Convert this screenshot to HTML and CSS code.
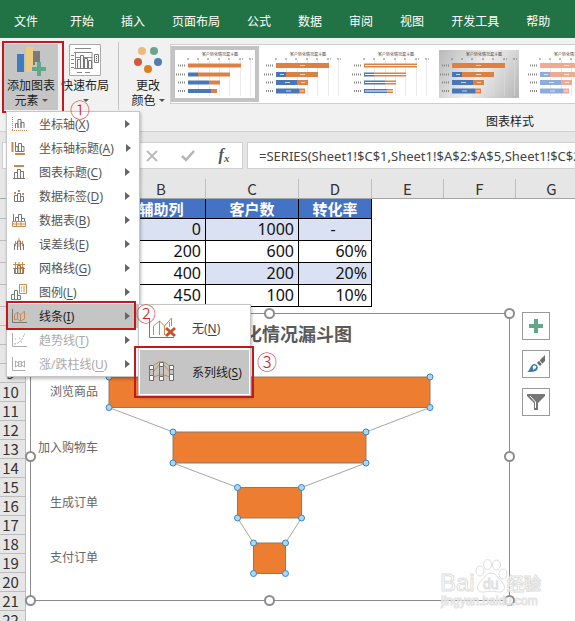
FILE: index.html
```html
<!DOCTYPE html>
<html lang="zh-CN">
<head>
<meta charset="utf-8">
<title>客户转化情况漏斗图</title>
<link rel="stylesheet" href="styles.css">
</head>
<body>
<svg class="defs" aria-hidden="true">
  <symbol id="thumb" viewBox="0 0 80 48">
    <g class="grid"><path d="M23.5 10V46M34.5 10V46M44.5 10V46M54.5 10V46M65.5 10V46M75.5 10V46"/></g>
    <text class="thumb-title" x="45" y="6" text-anchor="middle">客户转化情况漏斗图</text>
    <path class="ticks" d="M12 9h2M22 9h3M32 9h3M43 9h3M53 9h3M64 9h4M74 9h4"/>
    <path class="names" d="M3 15.5h8M1 24.500h10M3 32.500h8M3 41h8"/>
    <path class="b" d="M13 15.500H66M23 24.500H55M34 32.500H45M36 41H42"/>
    <path class="a" d="M13 24.500H23M13 32.500H34M13 41H36"/>
    <path class="mid" d="M14 15.500H66M14 24.500H55M14 32.500H45M14 41H42"/>
    <path class="vals" d="M37 15.500h5M17 24.500h4M37 24.500h5M22 32.500h5M38 32.500h4M23 41h5M37 41h4"/>
  </symbol>
</svg>

<nav class="tabs" aria-label="功能区">
  <a href="#file">文件</a><a href="#home">开始</a><a href="#insert">插入</a><a href="#layout">页面布局</a><a href="#formula">公式</a><a href="#data">数据</a><a href="#review">审阅</a><a href="#view">视图</a><a href="#dev">开发工具</a><a href="#help">帮助</a>
</nav>

<section class="ribbon">
  <div class="add-element">
    <button class="tool tool-active">
      <svg width="30" height="30" viewBox="0 0 30 30"><path fill="#3f7cbd" d="M1 9h7v18H1z"/><path fill="#efcd80" d="M10 2h7v25h-7z"/><path fill="#7a7a7a" d="M17 6h7v14h-7z"/><path fill="#c5c5c5" d="M16 20h3v-3h3v9h-6z"/><path fill="#5fa88a" d="M21 17h4v5h5v4h-5v5h-4v-5h-5v-4h5z"/></svg>
      <span>添加图表<br>元素<i class="caret"></i></span>
    </button>
    <div class="mark mark-one"></div>

    <div class="menu" role="menu">
      <button role="menuitem"><svg width="16" height="16" viewBox="0 0 16 16"><path class="g" d="M4.500 12V7.500H7V12M7 12V3.500h3V12M10 12V6.500h3V12"/><path class="o" stroke-dasharray="1 1" d="M1.500 1v14M1 14.500h15"/></svg><span>坐标轴(<u>X</u>)</span></button>
      <button role="menuitem"><svg width="16" height="16" viewBox="0 0 16 16"><path class="g" d="M4.500 2v9.500H13M4.500 6.500H7v5M7.500 11V3.500h3V11M10.500 6.500H13v5"/><path class="o2" d="M1.500 2v10M4 14h10"/></svg><span>坐标轴标题(<u>A</u>)</span></button>
      <button role="menuitem"><svg width="16" height="16" viewBox="0 0 16 16"><path class="g" d="M3.500 14.500v-6h3v6zM6.500 14.500v-9h3v9zM9.500 14.500v-7h3v7zM2 14.500h12"/><path class="o2" d="M3 2h10"/></svg><span>图表标题(<u>C</u>)</span></button>
      <button role="menuitem"><svg width="16" height="16" viewBox="0 0 16 16"><path class="g" d="M3.500 13.500v-6h3v6zM6.500 13.500v-8h3v8zM9.500 13.500v-5h3v5z"/><path class="o2" d="M3 5h2M7 3h2M11 6h2"/></svg><span>数据标签(<u>D</u>)</span></button>
      <button role="menuitem"><svg width="16" height="16" viewBox="0 0 16 16"><path class="g" d="M2.500 2v8M4.500 9V5.500h3V9M7.500 9V2.500h3V9M10.500 9V6.500h3V9"/><path class="o" d="M1.500 9.500h13v5h-13zM1.500 12h13M5.500 9.500v5M10 9.500v5"/></svg><span>数据表(<u>B</u>)</span></button>
      <button role="menuitem"><svg width="16" height="16" viewBox="0 0 16 16"><path class="g" d="M3.500 14v-6l3-1v7M6.500 14v-9h3v9M9.500 7l3 1v6"/><path class="o" d="M4.500 5v5M8 2v9M11.500 5v5"/></svg><span>误差线(<u>E</u>)</span></button>
      <button role="menuitem"><svg width="16" height="16" viewBox="0 0 16 16"><path class="o" d="M2 4.500h12M2 8.500h12M4.500 2v12M8 2v12M11.500 2v12"/><path class="g" d="M3.500 13.500v-5h3v5zM6.500 13.500v-8h3v8zM9.500 13.500v-6h3v6z"/></svg><span>网格线(<u>G</u>)</span></button>
      <button role="menuitem"><svg width="16" height="16" viewBox="0 0 16 16"><path class="g" d="M.5 15.500v-5h3v5zM3.500 15.500v-9h3v9zM6.500 15.500v-4h3v4z"/><path class="o" fill="#fff" d="M8.500.5h7v9h-7z"/><path class="o" d="M10 3h1M12 3h2M10 5h1M12 5h2M10 7h1M12 7h2"/></svg><span>图例(<u>L</u>)</span></button>
      <button role="menuitem" class="current"><svg width="16" height="16" viewBox="0 0 16 16"><path class="g" d="M1.500 1v13.500H16"/><path class="o" d="M3.500 12V7l3-3 3 3 4-4v8l-4 2-3-2zM6.500 4v7M9.500 7v6"/></svg><span>线条(<u>I</u>)</span></button>
      <button role="menuitem" class="off"><svg width="16" height="16" viewBox="0 0 16 16"><path class="g" d="M1.500 1v13.500H16"/><path class="g" d="M3 12c5 0 8-4 10-9" stroke-dasharray="2 1"/><path class="g" d="M4 7h1M8 6h1M10 10h1M13 2h1"/></svg><span>趋势线(<u>T</u>)</span></button>
      <button role="menuitem" class="off"><svg width="16" height="16" viewBox="0 0 16 16"><path class="g" d="M1.500 1v13.500H14M4.500 5v6l4-3zM13.500 5v6l-4-3zM7.500 5.500h3v5h-3z"/></svg><span>涨/跌柱线(<u>U</u>)</span></button>
    </div>
    <div class="mark mark-two"></div>
    <div class="submenu" role="menu">
      <button role="menuitem"><svg width="28" height="22" viewBox="0 0 28 22"><path class="g" d="M1.500 1v19.500H26"/><path class="o" d="M5.500 18V9l6-5 5 5 7-8v8M11.500 4v14M16.500 9v9M21.500 5v5"/><path d="M18 11l9 8M27 11l-9 8" stroke="#c8502c" stroke-width="3" fill="none"/></svg><span>无(<u>N</u>)</span></button>
      <button role="menuitem" class="current"><svg width="28" height="22" viewBox="0 0 28 22"><path class="o" d="M6 4l5-3h5l6 4M6 10l5-6h5l6 7M6 16l5-2h5l6 2"/><path fill="#fff" stroke="#6c6c6c" d="M1.500 4.500h4v4h-4zM1.500 14.500h4v5h-4zM11.500 1.500h4v4h-4zM11.500 15.500h4v4h-4zM21.500 4.500h4v4h-4zM21.500 13.500h4v6h-4z"/><path class="g" d="M1.500 8v7M5.500 8v7M11.500 5v11M15.500 5v11M21.500 8v6M25.500 8v6"/></svg><span>系列线(<u>S</u>)</span></button>
    </div>
    <div class="mark mark-three"></div>
    <span class="step step-one">①</span>
    <span class="step step-two">②</span>
    <span class="step step-three">③</span>
  </div>

  <button class="tool">
    <svg width="32" height="32" viewBox="0 0 32 32"><path fill="#fff" stroke="#aaa" d="M.5.500h31v31H.5z"/><path stroke="#888" fill="none" d="M6 4.500h16M6.500 8v17M5 8.500h18v16M6 13.500h17M2 11.500h3M2 15.500h3M2 19.500h3M2 23.500h3M5 24.500h19M8 28.500h5M16 28.500h5"/><path stroke="#777" fill="#f7f7f7" d="M8.500 15.500h3v9h-3zM11.500 11.500h3v13h-3zM15.500 14.500h3v10h-3zM19.500 16.500h3v8h-3zM25.500 10.500h4v8h-4z"/><path stroke="#555" d="M27 12.500h1M27 14.500h1M27 16.500h1"/></svg>
    <span>快速布局<br><i class="caret"></i></span>
  </button>
  <hr>
  <button class="tool">
    <svg width="32" height="32" viewBox="0 0 32 32"><circle cx="10" cy="7" r="4" fill="#e8bd7a"/><circle cx="22" cy="7" r="4" fill="#6aa58a"/><circle cx="6" cy="18" r="4" fill="#cf5b3c"/><circle cx="26" cy="18" r="4" fill="#4f7db4"/><circle cx="16" cy="25" r="4" fill="#dc7d22"/></svg>
    <span>更改<br>颜色<i class="caret"></i></span>
  </button>

  <div class="styles">
    <div class="gallery">
      <button class="thumb chosen" aria-label="样式 1"><svg><use href="#thumb"/></svg></button>
      <button class="thumb thick" aria-label="样式 2"><svg><use href="#thumb"/></svg></button>
      <button class="thumb lined" aria-label="样式 3"><svg><use href="#thumb"/></svg></button>
      <button class="thumb thick shade" aria-label="样式 4"><svg><use href="#thumb"/></svg></button>
      <button class="thumb thick pale" aria-label="样式 5"><svg><use href="#thumb"/></svg></button>
    </div>
    <div class="group-name">图表样式</div>
  </div>
</section>

<section class="formula-row">
  <input class="name-box" aria-label="名称框">
  <div class="formula-tools">
    <button aria-label="取消"><svg width="12" height="12" viewBox="0 0 12 12"><path d="M1 1l10 10M11 1L1 11" stroke="#bbb" stroke-width="2"/></svg></button>
    <button aria-label="输入"><svg width="14" height="12" viewBox="0 0 14 12"><path d="M1 6l4 4 8-9" stroke="#b5b5b5" stroke-width="2.500" fill="none"/></svg></button>
    <button class="fx" aria-label="插入函数">f<sub>x</sub></button>
  </div>
  <input class="formula" aria-label="编辑栏" value="=SERIES(Sheet1!$C$1,Sheet1!$A$2:$A$5,Sheet1!$C$2:$C$5,2)">
</section>

<main class="sheet">
  <table>
    <colgroup><col class="w-head"><col class="w-a"><col class="w-b"><col class="w-c"><col class="w-d"><col class="w-e"><col class="w-e"><col class="w-e"></colgroup>
    <thead><tr><th></th><th>A</th><th>B</th><th>C</th><th>D</th><th>E</th><th>F</th><th>G</th></tr></thead>
    <tbody>
      <tr class="title"><th>1</th><td></td><td>辅助列</td><td>客户数</td><td>转化率</td></tr>
      <tr class="data"><th>2</th><td></td><td class="tint">0</td><td class="tint">1000</td><td class="tint center">-</td></tr>
      <tr class="data"><th>3</th><td></td><td>200</td><td>600</td><td>60%</td></tr>
      <tr class="data"><th>4</th><td></td><td>400</td><td class="tint">200</td><td class="tint">20%</td></tr>
      <tr class="data"><th>5</th><td></td><td>450</td><td>100</td><td>10%</td></tr>
      <tr><th>6</th></tr><tr><th>7</th></tr><tr><th>8</th></tr><tr><th>9</th></tr><tr><th>10</th></tr><tr><th>11</th></tr><tr><th>12</th></tr><tr><th>13</th></tr><tr><th>14</th></tr><tr><th>15</th></tr><tr><th>16</th></tr><tr><th>17</th></tr><tr><th>18</th></tr><tr><th>19</th></tr><tr><th>20</th></tr><tr><th>21</th></tr><tr><th>22</th></tr>
    </tbody>
  </table>

  <div class="chart">
    <svg width="480" height="288" viewBox="30 313 480 288">
      <path class="frame" d="M30.500 313.500h479v287h-479z"/>
      <text class="chart-title" x="271" y="341" text-anchor="middle">客户转化情况漏斗图</text>
      <g class="labels" text-anchor="end"><text x="98" y="396">浏览商品</text><text x="98" y="452">加入购物车</text><text x="98" y="507">生成订单</text><text x="98" y="562">支付订单</text></g>
      <path class="series-lines" d="M109 407.500L173 432M430 407.500L366 432M173 463L237.500 487.500M366 463L301.500 487.500M237.500 518L253.500 543M301.500 518L285.500 543"/>
      <g class="bars"><path d="M109 377h321v30.500H109z"/><path d="M173 432h193v31H173z"/><path d="M237.500 487.500h64V518h-64z"/><path d="M253.500 543h32v30.500h-32z"/></g>
      <g class="dots"><circle cx="109" cy="377" r="3"/><circle cx="430" cy="377" r="3"/><circle cx="109" cy="407.500" r="3"/><circle cx="430" cy="407.500" r="3"/><circle cx="173" cy="432" r="3"/><circle cx="366" cy="432" r="3"/><circle cx="173" cy="463" r="3"/><circle cx="366" cy="463" r="3"/><circle cx="237.500" cy="487.500" r="3"/><circle cx="301.500" cy="487.500" r="3"/><circle cx="237.500" cy="518" r="3"/><circle cx="301.500" cy="518" r="3"/><circle cx="253.500" cy="543" r="3"/><circle cx="285.500" cy="543" r="3"/><circle cx="253.500" cy="573.500" r="3"/><circle cx="285.500" cy="573.500" r="3"/></g>
      <g class="handles"><circle cx="269.500" cy="313.500" r="4.500"/><circle cx="509.500" cy="313.500" r="4.500"/><circle cx="30.500" cy="456.500" r="4.500"/><circle cx="509.500" cy="456.500" r="4.500"/><circle cx="30.500" cy="600.500" r="4.500"/><circle cx="269.500" cy="600.500" r="4.500"/><circle cx="509.500" cy="600.500" r="4.500"/></g>
      <g class="watermark">
        <text class="brand" x="440" y="591">Bai</text>
        <ellipse cx="480" cy="571" rx="4" ry="5"/><ellipse cx="487.500" cy="564.500" rx="4" ry="5"/><ellipse cx="496.500" cy="565" rx="4" ry="5"/><ellipse cx="503" cy="574" rx="4" ry="5"/>
        <path d="M491 573c5 0 7 5 11 9 5 5 2 11-4 10-5-1-9-1-14 0-6 1-9-5-4-10 4-4 6-9 11-9z"/>
        <text class="brand-du" x="483" y="589">du</text>
        <text class="brand-cn" x="507" y="590">经验</text>
        <text class="brand-url" x="441" y="605">jingyan.baidu.com</text>
      </g>
    </svg>
    <div class="chart-tools">
      <button aria-label="图表元素"><svg width="20" height="20" viewBox="0 0 20 20"><path fill="#5fa88a" d="M8 3h4v5h5v4h-5v5H8v-5H3V8h5z"/></svg></button>
      <button aria-label="图表样式"><svg width="20" height="20" viewBox="0 0 20 20"><path fill="#6d6d6d" d="M19 1v6l-5 5-3-3z"/><path stroke="#fff" d="M13 6l3 4"/><path fill="#3f78ad" d="M1 18c3-1 3-7 7-8 3 0 5 3 3 6-2 2-6 2-10 2z"/><path fill="#fff" d="M7 12c2-1 4 0 3 2l-3 2c1-2-1-2 0-4z"/></svg></button>
      <button aria-label="图表筛选器"><svg width="20" height="20" viewBox="0 0 20 20"><path fill="#777" d="M1 2h18v2l-7 7v7H8v-7L1 4z"/><path stroke="#fff" fill="none" d="M4 4l5.500 6v6"/></svg></button>
    </div>
  </div>
</main>
</body>
</html>
```
FILE: styles.css
```css
* { box-sizing: border-box; }

body {
  margin: 0;
  height: 100vh;
  display: flex;
  flex-direction: column;
  overflow: hidden;
  background: #fff;
  color: #222;
  font: 12px/15px "Noto Sans", "Noto Sans CJK SC", sans-serif;
}

button, input { font: inherit; color: inherit; border: 0; padding: 0; margin: 0; background: none; border-radius: 0; }
u { text-underline-offset: 2px; }
.defs { display: none; }

.tabs {
  flex: none;
  height: 38px;
  display: flex;
  gap: 27px;
  padding: 14px 14px 0;
  background: #217346;
  white-space: nowrap;
}
.tabs a { color: #fff; text-decoration: none; }
.tabs a:first-child { margin-right: 5px; }

.ribbon {
  flex: none;
  height: 94px;
  display: flex;
  align-items: flex-start;
  padding: 6px 0 0 4px;
  background: #f1f1f1;
  border-bottom: 1px solid #cfcfcf;
}
.add-element { position: relative; z-index: 2; }
.tool {
  width: 54px;
  height: 66px;
  display: flex;
  flex-direction: column;
  align-items: center;
  gap: 2px;
  line-height: 15px;
  white-space: nowrap;
}
.tool svg { height: 32px; flex: none; }
.tool-active { background: #c5c5c5; }
.ribbon hr { width: 1px; height: 68px; margin: -2px 2px 0 6px; border: 0; background: #c3c3c3; }
.caret { display: inline-block; border: 3px solid transparent; border-top-color: #555; border-bottom: 0; margin-left: 3px; vertical-align: 3px; }

.styles { flex: 1; min-width: 0; margin-left: -5px; }
.gallery {
  height: 60px;
  display: flex;
  overflow: hidden;
  background: #fff;
  border: 1px solid #cfcfcf;
  border-right: 0;
}
.thumb { flex: none; width: 88px; height: 56px; margin-top: 1px; border: 4px solid transparent; --a: #4a76b8; --b: #dd8044; --w: 4px; }
.thumb svg { display: block; width: 80px; height: 48px; background: #fff; }
.chosen { border-color: #c3c3c3; }
.thick { --w: 5px; --vals: #fff; }
.lined { --mid: #fff; }
.shade svg { background: linear-gradient(120deg, #b9b9b9, #efefef 50%, #b5b5b5); }
.pale { --a: #8fabdc; --b: #efaa92; }
.thumb-title { font-size: 4px; fill: #444; }
.grid { stroke: #ddd; stroke-opacity: .6; }
.ticks, .names { stroke: #777; stroke-width: 1px; stroke-dasharray: 2 1; }
.names { stroke-width: 2px; stroke: #888; stroke-dasharray: 1 1; }
.a { stroke: var(--a); stroke-width: var(--w); }
.b { stroke: var(--b); stroke-width: var(--w); }
.mid { stroke: var(--mid, none); stroke-width: 1px; }
.vals { stroke: var(--vals, none); stroke-width: 1px; stroke-opacity: .7; }
.group-name { margin-top: 10px; padding-left: 316px; white-space: nowrap; }

.menu, .submenu { position: absolute; background: #fff; border: 1px solid #c6c6c6; box-shadow: 1px 2px 3px rgba(0, 0, 0, .25); }
.menu { left: 2px; top: 67px; width: 134px; color: #555; }
.menu button {
  width: 100%;
  height: 24px;
  display: flex;
  align-items: center;
  gap: 12px;
  padding: 0 9px 0 4px;
  text-align: left;
  white-space: nowrap;
}
.menu button::after { content: ""; margin-left: auto; border: 4px solid transparent; border-left: 5px solid #666; border-right: 0; }
.menu .current, .submenu .current { background: #c5c5c5; color: #222; }
.menu .off { color: #aaa; }
.menu .off svg { opacity: .6; }
.menu svg, .submenu svg { flex: none; }
.g { fill: none; stroke: #777; }
.o { fill: none; stroke: #c98a4c; }
.o2 { fill: none; stroke: #c98a4c; stroke-width: 2px; }

.submenu { left: 134px; top: 260px; width: 113px; padding: 1px; color: #444; }
.submenu button { width: 100%; height: 44px; display: flex; align-items: center; gap: 16px; padding-left: 8px; white-space: nowrap; }

.mark { position: absolute; border: 2px solid #c01a1f; pointer-events: none; }
.mark-one { left: -2px; top: -3px; width: 62px; height: 72px; }
.mark-two { left: 2px; top: 257px; width: 130px; height: 29px; }
.mark-three { left: 130px; top: 302px; width: 120px; height: 52px; }
.step { position: absolute; color: #d0262c; font: 300 20px/20px "Noto Sans CJK SC", sans-serif; }
.step-one { left: 66px; top: 56px; }
.step-two { left: 132px; top: 260px; }
.step-three { left: 253px; top: 308px; }

.formula-row { flex: none; display: flex; gap: 4px; padding: 10px 0 10px 2px; background: #e6e6e6; }
.name-box, .formula-tools, .formula { height: 27px; background: #fff; border: 1px solid #cfcfcf; }
.name-box { width: 108px; }
.formula-tools { flex: none; width: 129px; display: flex; justify-content: flex-end; }
.formula-tools button { width: 36px; display: flex; align-items: center; justify-content: center; }
.formula-tools .fx { display: block; color: #555; font: italic bold 16px/24px "Liberation Serif", serif; }
.fx sub { font-size: 11px; vertical-align: -2px; }
.formula { flex: 1; min-width: 0; padding-left: 11px; border-right: 0; color: #444; font-size: 13px; }

.sheet { position: relative; flex: 1; min-height: 0; overflow: hidden; }
table { table-layout: fixed; width: 588px; border-collapse: separate; border-spacing: 0; }
.w-head { width: 26px; }
.w-a { width: 91px; }
.w-b { width: 89px; }
.w-c { width: 93px; }
.w-d { width: 73px; }
.w-e { width: 72px; }
th, td { padding: 0; height: 19px; font-size: 16px; line-height: 18px; }
th { background: #e6e6e6; font: 15px/18px "Noto Sans CJK SC", sans-serif; color: #333; border-bottom: 1px solid #bdbdbd; border-right: 1px solid #bdbdbd; }
thead th { height: 20px; line-height: 19px; border-bottom-color: #a5a5a5; }
tbody th { padding-right: 4px; }
.title td, .title th { height: 20px; }
.title td { background: #4472c4; color: #fff; font-weight: bold; font-size: 15px; text-align: center; border: solid #000; border-width: 0 1px 1px 0; }
.data th, .data td { height: 22px; }
.data td { text-align: right; padding-right: 4px; line-height: 21px; color: #111; border: solid #000; border-width: 0 1px 1px 0; }
.data .tint { background: #d9e1f2; }
.data .center { text-align: center; }

.chart { position: absolute; left: 30px; top: 134px; }
.chart > svg { display: block; overflow: visible; }
.frame { fill: #fff; stroke: #8c8c8c; }
.chart-title { font-size: 18px; font-weight: bold; fill: #595959; }
.labels { font-size: 12px; fill: #666; }
.series-lines { stroke: #a6a6a6; }
.bars { fill: #ed7d31; stroke: #8f7a66; }
.dots { fill: #a9d8f5; stroke: #3c82bd; }
.handles { fill: #fff; stroke: #8c8c8c; stroke-width: 2px; }
.watermark { fill: #fff; fill-opacity: .8; stroke: #dedede; stroke-width: 1px; font-family: "Liberation Sans", "Noto Sans CJK SC", sans-serif; }
.brand { font-size: 24px; }
.brand-du { font-size: 14px; }
.brand-cn { font-size: 17px; font-weight: bold; }
.brand-url { font-size: 12px; stroke: #e4e4e4; }
.chart-tools { position: absolute; left: 492px; top: -1px; display: flex; flex-direction: column; gap: 10px; }
.chart-tools button { width: 28px; height: 28px; display: grid; place-items: center; background: #fff; border: 1px solid #999; }
```
